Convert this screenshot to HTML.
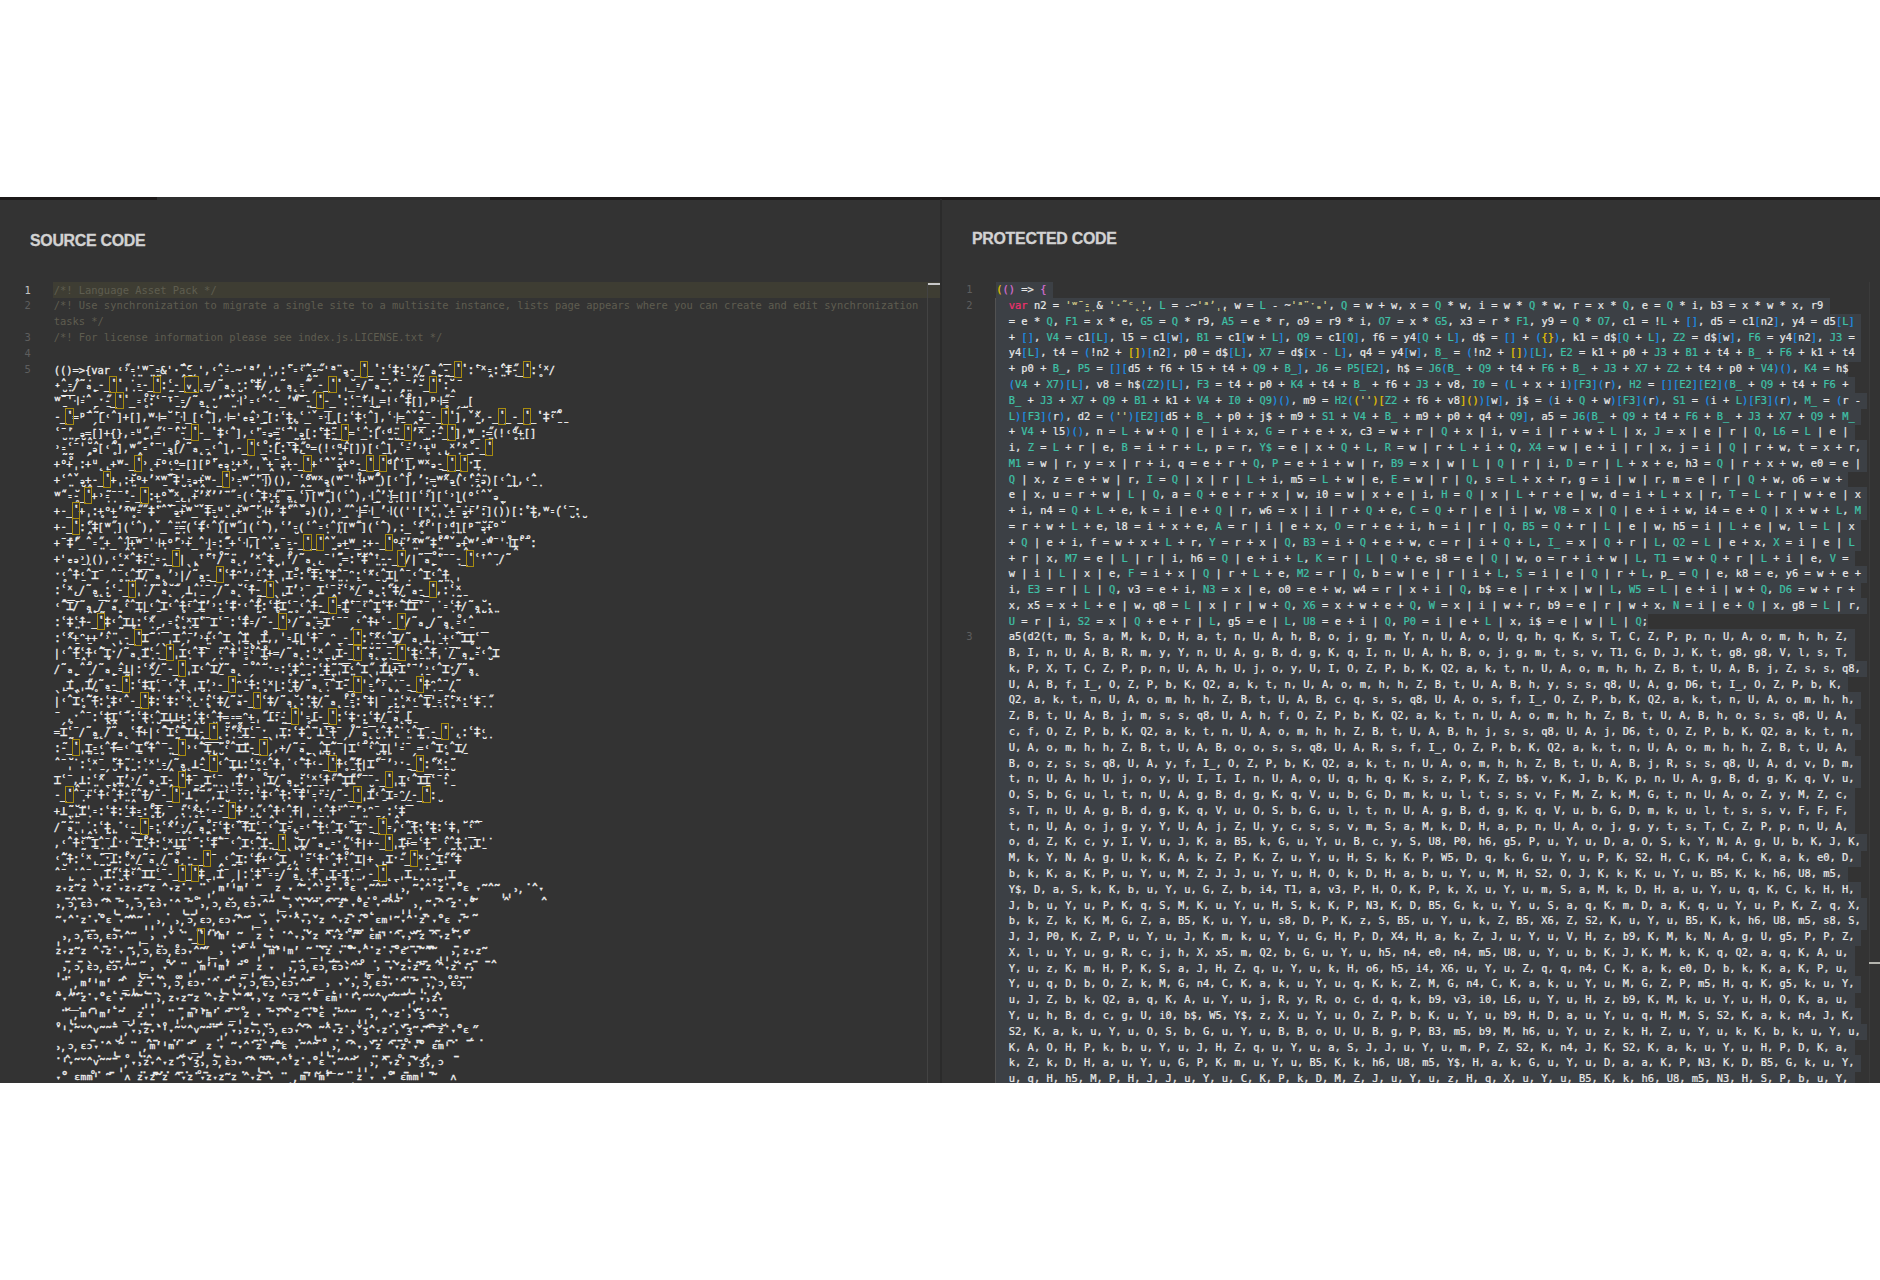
<!DOCTYPE html>
<html><head><meta charset="utf-8"><title>code</title>
<style>
html,body{margin:0;padding:0;background:#fff;}
#app{position:absolute;left:0;top:197.0px;width:1880px;height:885.5px;background:#333333;overflow:hidden;}
.t{position:absolute;font-family:"Liberation Sans",sans-serif;font-weight:bold;color:#d2d2d2;white-space:pre;-webkit-text-stroke:0.35px;}
.l{position:absolute;white-space:pre;font-family:"DejaVu Sans Mono","Liberation Mono",monospace;font-size:10.411px;line-height:15.774px;height:15.774px;color:#e8e8e8;-webkit-text-stroke:0.22px;}
.r{background:#3c4045;height:16.474px;}
.n{position:absolute;white-space:pre;font-family:"DejaVu Sans Mono","Liberation Mono",monospace;font-size:10.411px;line-height:15.774px;height:15.774px;color:#5e5e5e;text-align:right;width:20px;}
.c{color:#5f5d50;-webkit-text-stroke:0;}
.g{font-size:12.4px;letter-spacing:-1.1975px;outline:1px solid #a88c10;outline-offset:-0.5px;}
.w{color:#eeeeee;-webkit-text-stroke:0.33px;}
.m{font-size:12.4px;letter-spacing:-1.1975px;}
.m2{font-size:15.5px;letter-spacing:-3.0638px;vertical-align:-2.5px;}
.bar{position:absolute;}
</style></head><body>
<div id="app">
<div class="bar" style="left:0;top:0;width:1880px;height:2.5px;background:#1d1919"></div><div class="bar" style="left:157px;top:0;width:333px;height:2.5px;background:#2e2e2e"></div><div class="bar" style="left:940px;top:2px;width:1.6px;height:900px;background:#2b2b2b"></div><div class="bar" style="left:1869px;top:85.0px;width:1px;height:900px;background:#3b3b3b"></div><div class="bar" style="left:1869px;top:765.2px;width:11px;height:2px;background:#b4b4ae"></div><div class="t" id="t1" style="left:29.5px;top:33.400000000000006px;font-size:17.2px;line-height:20px;letter-spacing:-0.3px;transform-origin:0 0;transform:scaleX(0.925)">SOURCE CODE</div><div class="t" id="t2" style="left:971.5px;top:31.0px;font-size:17.2px;line-height:20px;letter-spacing:-0.3px;transform-origin:0 0;transform:scaleX(0.925)">PROTECTED CODE</div><div class="bar" style="left:995.0px;top:101.12400000000002px;width:1.3px;height:900px;background:#525252"></div><div class="n" style="left:952.4px;top:85.35px">1</div><div class="l r" style="left:996.3px;top:85.35px"><span style="color:#e8c400">(</span><span style="color:#d66fd2">(</span><span style="color:#d66fd2">)</span> =&gt; <span style="color:#d66fd2">{</span> </div>
<div class="n" style="left:952.4px;top:101.12px">2</div><div class="l r" style="left:996.3px;top:101.12px">  <span style="color:#f0306e">var</span> n2 = <span style="color:#d6cf8a">'ʷˉ̤꞊̣</span> &amp; <span style="color:#d6cf8a">'·˜ᶜ˛̣'</span>, <span style="color:#3fc1a8">L</span> = -~<span style="color:#d6cf8a">'ᵃʼˌ̣</span>, w = <span style="color:#3fc1a8">L</span> - ~<span style="color:#d6cf8a">'ᵃ¨ˑₔ'</span>, <span style="color:#3fc1a8">Q</span> = w + w, x = <span style="color:#3fc1a8">Q</span> * w, i = w * <span style="color:#3fc1a8">Q</span> * w, r = x * <span style="color:#3fc1a8">Q</span>, e = <span style="color:#3fc1a8">Q</span> * i, b3 = x * w * x, r9 </div>
<div class="l r" style="left:996.3px;top:116.90px">  = e * <span style="color:#3fc1a8">Q</span>, <span style="color:#3fc1a8">F1</span> = x * e, <span style="color:#3fc1a8">G5</span> = <span style="color:#3fc1a8">Q</span> * r9, <span style="color:#3fc1a8">A5</span> = e * r, o9 = r9 * i, <span style="color:#3fc1a8">O7</span> = x * <span style="color:#3fc1a8">G5</span>, x3 = r * <span style="color:#3fc1a8">F1</span>, y9 = <span style="color:#3fc1a8">Q</span> * <span style="color:#3fc1a8">O7</span>, c1 = !<span style="color:#3fc1a8">L</span> + <span style="color:#1a90ea">[</span><span style="color:#1a90ea">]</span>, d5 = c1<span style="color:#1a90ea">[</span>n2<span style="color:#1a90ea">]</span>, y4 = d5<span style="color:#1a90ea">[</span><span style="color:#3fc1a8">L</span><span style="color:#1a90ea">]</span> </div>
<div class="l r" style="left:996.3px;top:132.67px">  + <span style="color:#1a90ea">[</span><span style="color:#1a90ea">]</span>, <span style="color:#3fc1a8">V4</span> = c1<span style="color:#1a90ea">[</span><span style="color:#3fc1a8">L</span><span style="color:#1a90ea">]</span>, l5 = c1<span style="color:#1a90ea">[</span>w<span style="color:#1a90ea">]</span>, <span style="color:#3fc1a8">B1</span> = c1<span style="color:#1a90ea">[</span>w + <span style="color:#3fc1a8">L</span><span style="color:#1a90ea">]</span>, <span style="color:#3fc1a8">Q9</span> = c1<span style="color:#1a90ea">[</span><span style="color:#3fc1a8">Q</span><span style="color:#1a90ea">]</span>, f6 = y4<span style="color:#1a90ea">[</span><span style="color:#3fc1a8">Q</span> + <span style="color:#3fc1a8">L</span><span style="color:#1a90ea">]</span>, d$ = <span style="color:#1a90ea">[</span><span style="color:#1a90ea">]</span> + <span style="color:#1a90ea">(</span><span style="color:#e8c400">{</span><span style="color:#e8c400">}</span><span style="color:#1a90ea">)</span>, k1 = d$<span style="color:#1a90ea">[</span><span style="color:#3fc1a8">Q</span> + <span style="color:#3fc1a8">L</span><span style="color:#1a90ea">]</span>, <span style="color:#3fc1a8">Z2</span> = d$<span style="color:#1a90ea">[</span>w<span style="color:#1a90ea">]</span>, <span style="color:#3fc1a8">F6</span> = y4<span style="color:#1a90ea">[</span>n2<span style="color:#1a90ea">]</span>, <span style="color:#3fc1a8">J3</span> = </div>
<div class="l r" style="left:996.3px;top:148.45px">  y4<span style="color:#1a90ea">[</span><span style="color:#3fc1a8">L</span><span style="color:#1a90ea">]</span>, t4 = <span style="color:#1a90ea">(</span>!n2 + <span style="color:#e8c400">[</span><span style="color:#e8c400">]</span><span style="color:#1a90ea">)</span><span style="color:#1a90ea">[</span>n2<span style="color:#1a90ea">]</span>, p0 = d$<span style="color:#1a90ea">[</span><span style="color:#3fc1a8">L</span><span style="color:#1a90ea">]</span>, <span style="color:#3fc1a8">X7</span> = d$<span style="color:#1a90ea">[</span>x - <span style="color:#3fc1a8">L</span><span style="color:#1a90ea">]</span>, q4 = y4<span style="color:#1a90ea">[</span>w<span style="color:#1a90ea">]</span>, <span style="color:#3fc1a8">B_</span> = <span style="color:#1a90ea">(</span>!n2 + <span style="color:#e8c400">[</span><span style="color:#e8c400">]</span><span style="color:#1a90ea">)</span><span style="color:#1a90ea">[</span><span style="color:#3fc1a8">L</span><span style="color:#1a90ea">]</span>, <span style="color:#3fc1a8">E2</span> = k1 + p0 + <span style="color:#3fc1a8">J3</span> + <span style="color:#3fc1a8">B1</span> + t4 + <span style="color:#3fc1a8">B_</span> + <span style="color:#3fc1a8">F6</span> + k1 + t4 </div>
<div class="l r" style="left:996.3px;top:164.22px">  + p0 + <span style="color:#3fc1a8">B_</span>, <span style="color:#3fc1a8">P5</span> = <span style="color:#1a90ea">[</span><span style="color:#1a90ea">]</span><span style="color:#1a90ea">[</span>d5 + f6 + l5 + t4 + <span style="color:#3fc1a8">Q9</span> + <span style="color:#3fc1a8">B_</span><span style="color:#1a90ea">]</span>, <span style="color:#3fc1a8">J6</span> = <span style="color:#3fc1a8">P5</span><span style="color:#1a90ea">[</span><span style="color:#3fc1a8">E2</span><span style="color:#1a90ea">]</span>, h$ = <span style="color:#3fc1a8">J6</span><span style="color:#1a90ea">(</span><span style="color:#3fc1a8">B_</span> + <span style="color:#3fc1a8">Q9</span> + t4 + <span style="color:#3fc1a8">F6</span> + <span style="color:#3fc1a8">B_</span> + <span style="color:#3fc1a8">J3</span> + <span style="color:#3fc1a8">X7</span> + <span style="color:#3fc1a8">Z2</span> + t4 + p0 + <span style="color:#3fc1a8">V4</span><span style="color:#1a90ea">)</span><span style="color:#1a90ea">(</span><span style="color:#1a90ea">)</span>, <span style="color:#3fc1a8">K4</span> = h$</div>
<div class="l r" style="left:996.3px;top:179.99px">  <span style="color:#1a90ea">(</span><span style="color:#3fc1a8">V4</span> + <span style="color:#3fc1a8">X7</span><span style="color:#1a90ea">)</span><span style="color:#1a90ea">[</span><span style="color:#3fc1a8">L</span><span style="color:#1a90ea">]</span>, v8 = h$<span style="color:#1a90ea">(</span><span style="color:#3fc1a8">Z2</span><span style="color:#1a90ea">)</span><span style="color:#1a90ea">[</span><span style="color:#3fc1a8">L</span><span style="color:#1a90ea">]</span>, <span style="color:#3fc1a8">F3</span> = t4 + p0 + <span style="color:#3fc1a8">K4</span> + t4 + <span style="color:#3fc1a8">B_</span> + f6 + <span style="color:#3fc1a8">J3</span> + v8, <span style="color:#3fc1a8">I0</span> = <span style="color:#1a90ea">(</span><span style="color:#3fc1a8">L</span> + x + i<span style="color:#1a90ea">)</span><span style="color:#1a90ea">[</span><span style="color:#3fc1a8">F3</span><span style="color:#1a90ea">]</span><span style="color:#1a90ea">(</span>r<span style="color:#1a90ea">)</span>, <span style="color:#3fc1a8">H2</span> = <span style="color:#1a90ea">[</span><span style="color:#1a90ea">]</span><span style="color:#1a90ea">[</span><span style="color:#3fc1a8">E2</span><span style="color:#1a90ea">]</span><span style="color:#1a90ea">[</span><span style="color:#3fc1a8">E2</span><span style="color:#1a90ea">]</span><span style="color:#1a90ea">(</span><span style="color:#3fc1a8">B_</span> + <span style="color:#3fc1a8">Q9</span> + t4 + <span style="color:#3fc1a8">F6</span> + </div>
<div class="l r" style="left:996.3px;top:195.77px">  <span style="color:#3fc1a8">B_</span> + <span style="color:#3fc1a8">J3</span> + <span style="color:#3fc1a8">X7</span> + <span style="color:#3fc1a8">Q9</span> + <span style="color:#3fc1a8">B1</span> + k1 + <span style="color:#3fc1a8">V4</span> + <span style="color:#3fc1a8">I0</span> + <span style="color:#3fc1a8">Q9</span><span style="color:#1a90ea">)</span><span style="color:#1a90ea">(</span><span style="color:#1a90ea">)</span>, m9 = <span style="color:#3fc1a8">H2</span><span style="color:#1a90ea">(</span><span style="color:#e8c400">(</span><span style="color:#d6cf8a">''</span><span style="color:#e8c400">)</span><span style="color:#e8c400">[</span><span style="color:#3fc1a8">Z2</span> + f6 + v8<span style="color:#e8c400">]</span><span style="color:#e8c400">(</span><span style="color:#e8c400">)</span><span style="color:#1a90ea">)</span><span style="color:#1a90ea">[</span>w<span style="color:#1a90ea">]</span>, j$ = <span style="color:#1a90ea">(</span>i + <span style="color:#3fc1a8">Q</span> + w<span style="color:#1a90ea">)</span><span style="color:#1a90ea">[</span><span style="color:#3fc1a8">F3</span><span style="color:#1a90ea">]</span><span style="color:#1a90ea">(</span>r<span style="color:#1a90ea">)</span>, <span style="color:#3fc1a8">S1</span> = <span style="color:#1a90ea">(</span>i + <span style="color:#3fc1a8">L</span><span style="color:#1a90ea">)</span><span style="color:#1a90ea">[</span><span style="color:#3fc1a8">F3</span><span style="color:#1a90ea">]</span><span style="color:#1a90ea">(</span>r<span style="color:#1a90ea">)</span>, <span style="color:#3fc1a8">M_</span> = <span style="color:#1a90ea">(</span>r - </div>
<div class="l r" style="left:996.3px;top:211.54px">  <span style="color:#3fc1a8">L</span><span style="color:#1a90ea">)</span><span style="color:#1a90ea">[</span><span style="color:#3fc1a8">F3</span><span style="color:#1a90ea">]</span><span style="color:#1a90ea">(</span>r<span style="color:#1a90ea">)</span>, d2 = <span style="color:#1a90ea">(</span><span style="color:#d6cf8a">''</span><span style="color:#1a90ea">)</span><span style="color:#1a90ea">[</span><span style="color:#3fc1a8">E2</span><span style="color:#1a90ea">]</span><span style="color:#1a90ea">[</span>d5 + <span style="color:#3fc1a8">B_</span> + p0 + j$ + m9 + <span style="color:#3fc1a8">S1</span> + <span style="color:#3fc1a8">V4</span> + <span style="color:#3fc1a8">B_</span> + m9 + p0 + q4 + <span style="color:#3fc1a8">Q9</span><span style="color:#1a90ea">]</span>, a5 = <span style="color:#3fc1a8">J6</span><span style="color:#1a90ea">(</span><span style="color:#3fc1a8">B_</span> + <span style="color:#3fc1a8">Q9</span> + t4 + <span style="color:#3fc1a8">F6</span> + <span style="color:#3fc1a8">B_</span> + <span style="color:#3fc1a8">J3</span> + <span style="color:#3fc1a8">X7</span> + <span style="color:#3fc1a8">Q9</span> + <span style="color:#3fc1a8">M_</span> </div>
<div class="l r" style="left:996.3px;top:227.32px">  + <span style="color:#3fc1a8">V4</span> + l5<span style="color:#1a90ea">)</span><span style="color:#1a90ea">(</span><span style="color:#1a90ea">)</span>, n = <span style="color:#3fc1a8">L</span> + w + <span style="color:#3fc1a8">Q</span> | e | i + x, <span style="color:#3fc1a8">G</span> = r + e + x, c3 = w + r | <span style="color:#3fc1a8">Q</span> + x | i, v = i | r + w + <span style="color:#3fc1a8">L</span> | x, <span style="color:#3fc1a8">J</span> = x | e | r | <span style="color:#3fc1a8">Q</span>, <span style="color:#3fc1a8">L6</span> = <span style="color:#3fc1a8">L</span> | e | </div>
<div class="l r" style="left:996.3px;top:243.09px">  i, <span style="color:#3fc1a8">Z</span> = <span style="color:#3fc1a8">L</span> + r | e, <span style="color:#3fc1a8">B</span> = i + r + <span style="color:#3fc1a8">L</span>, p = r, <span style="color:#3fc1a8">Y$</span> = e | x + <span style="color:#3fc1a8">Q</span> + <span style="color:#3fc1a8">L</span>, <span style="color:#3fc1a8">R</span> = w | r + <span style="color:#3fc1a8">L</span> + i + <span style="color:#3fc1a8">Q</span>, <span style="color:#3fc1a8">X4</span> = w | e + i | r | x, j = i | <span style="color:#3fc1a8">Q</span> | r + w, t = x + r, </div>
<div class="l r" style="left:996.3px;top:258.86px">  <span style="color:#3fc1a8">M1</span> = w | r, y = x | r + i, q = e + r + <span style="color:#3fc1a8">Q</span>, <span style="color:#3fc1a8">P</span> = e + i + w | r, <span style="color:#3fc1a8">B9</span> = x | w | <span style="color:#3fc1a8">L</span> | <span style="color:#3fc1a8">Q</span> | r | i, <span style="color:#3fc1a8">D</span> = r | <span style="color:#3fc1a8">L</span> + x + e, h3 = <span style="color:#3fc1a8">Q</span> | r + x + w, e0 = e | </div>
<div class="l r" style="left:996.3px;top:274.64px">  <span style="color:#3fc1a8">Q</span> | x, z = e + w | r, <span style="color:#3fc1a8">I</span> = <span style="color:#3fc1a8">Q</span> | x | r | <span style="color:#3fc1a8">L</span> + i, m5 = <span style="color:#3fc1a8">L</span> + w | e, <span style="color:#3fc1a8">E</span> = w | r | <span style="color:#3fc1a8">Q</span>, s = <span style="color:#3fc1a8">L</span> + x + r, g = i | w | r, m = e | r | <span style="color:#3fc1a8">Q</span> + w, o6 = w + </div>
<div class="l r" style="left:996.3px;top:290.41px">  e | x, u = r + w | <span style="color:#3fc1a8">L</span> | <span style="color:#3fc1a8">Q</span>, a = <span style="color:#3fc1a8">Q</span> + e + r + x | w, i0 = w | x + e | i, <span style="color:#3fc1a8">H</span> = <span style="color:#3fc1a8">Q</span> | x | <span style="color:#3fc1a8">L</span> + r + e | w, d = i + <span style="color:#3fc1a8">L</span> + x | r, <span style="color:#3fc1a8">T</span> = <span style="color:#3fc1a8">L</span> + r | w + e | x </div>
<div class="l r" style="left:996.3px;top:306.19px">  + i, n4 = <span style="color:#3fc1a8">Q</span> + <span style="color:#3fc1a8">L</span> + e, k = i | e + <span style="color:#3fc1a8">Q</span> | r, w6 = x | i | r + <span style="color:#3fc1a8">Q</span> + e, <span style="color:#3fc1a8">C</span> = <span style="color:#3fc1a8">Q</span> + r | e | i | w, <span style="color:#3fc1a8">V8</span> = x | <span style="color:#3fc1a8">Q</span> | e + i + w, i4 = e + <span style="color:#3fc1a8">Q</span> | x + w + <span style="color:#3fc1a8">L</span>, <span style="color:#3fc1a8">M</span> </div>
<div class="l r" style="left:996.3px;top:321.96px">  = r + w + <span style="color:#3fc1a8">L</span> + e, l8 = i + x + e, <span style="color:#3fc1a8">A</span> = r | i | e + x, <span style="color:#3fc1a8">O</span> = r + e + i, h = i | r | <span style="color:#3fc1a8">Q</span>, <span style="color:#3fc1a8">B5</span> = <span style="color:#3fc1a8">Q</span> + r | <span style="color:#3fc1a8">L</span> | e | w, h5 = i | <span style="color:#3fc1a8">L</span> + e | w, l = <span style="color:#3fc1a8">L</span> | x </div>
<div class="l r" style="left:996.3px;top:337.73px">  + <span style="color:#3fc1a8">Q</span> | e + i, f = w + x + <span style="color:#3fc1a8">L</span> + r, <span style="color:#3fc1a8">Y</span> = r + x | <span style="color:#3fc1a8">Q</span>, <span style="color:#3fc1a8">B3</span> = i + <span style="color:#3fc1a8">Q</span> + e + w, c = r | i + <span style="color:#3fc1a8">Q</span> + <span style="color:#3fc1a8">L</span>, <span style="color:#3fc1a8">I_</span> = x | <span style="color:#3fc1a8">Q</span> + r | <span style="color:#3fc1a8">L</span>, <span style="color:#3fc1a8">Q2</span> = <span style="color:#3fc1a8">L</span> | e + x, <span style="color:#3fc1a8">X</span> = i | e | <span style="color:#3fc1a8">L</span> </div>
<div class="l r" style="left:996.3px;top:353.51px">  + r | x, <span style="color:#3fc1a8">M7</span> = e | <span style="color:#3fc1a8">L</span> | r | i, h6 = <span style="color:#3fc1a8">Q</span> | e + i + <span style="color:#3fc1a8">L</span>, <span style="color:#3fc1a8">K</span> = r | <span style="color:#3fc1a8">L</span> | <span style="color:#3fc1a8">Q</span> + e, s8 = e | <span style="color:#3fc1a8">Q</span> | w, o = r + i + w | <span style="color:#3fc1a8">L</span>, <span style="color:#3fc1a8">T1</span> = w + <span style="color:#3fc1a8">Q</span> + r | <span style="color:#3fc1a8">L</span> + i | e, <span style="color:#3fc1a8">V</span> = </div>
<div class="l r" style="left:996.3px;top:369.28px">  w | i | <span style="color:#3fc1a8">L</span> | x | e, <span style="color:#3fc1a8">F</span> = i + x | <span style="color:#3fc1a8">Q</span> | r + <span style="color:#3fc1a8">L</span> + e, <span style="color:#3fc1a8">M2</span> = r | <span style="color:#3fc1a8">Q</span>, b = w | e | r | i + <span style="color:#3fc1a8">L</span>, <span style="color:#3fc1a8">S</span> = i | e | <span style="color:#3fc1a8">Q</span> | r + <span style="color:#3fc1a8">L</span>, p_ = <span style="color:#3fc1a8">Q</span> | e, k8 = e, y6 = w + e + </div>
<div class="l r" style="left:996.3px;top:385.06px">  i, <span style="color:#3fc1a8">E3</span> = r | <span style="color:#3fc1a8">L</span> | <span style="color:#3fc1a8">Q</span>, v3 = e + i, <span style="color:#3fc1a8">N3</span> = x | e, o0 = e + w, w4 = r | x + i | <span style="color:#3fc1a8">Q</span>, b$ = e | r + x | w | <span style="color:#3fc1a8">L</span>, <span style="color:#3fc1a8">W5</span> = <span style="color:#3fc1a8">L</span> | e + i | w + <span style="color:#3fc1a8">Q</span>, <span style="color:#3fc1a8">D6</span> = w + r + </div>
<div class="l r" style="left:996.3px;top:400.83px">  x, x5 = x + <span style="color:#3fc1a8">L</span> + e | w, q8 = <span style="color:#3fc1a8">L</span> | x | r | w + <span style="color:#3fc1a8">Q</span>, <span style="color:#3fc1a8">X6</span> = x + w + e + <span style="color:#3fc1a8">Q</span>, <span style="color:#3fc1a8">W</span> = x | i | w + r, b9 = e | r | w + x, <span style="color:#3fc1a8">N</span> = i | e + <span style="color:#3fc1a8">Q</span> | x, g8 = <span style="color:#3fc1a8">L</span> | r, </div>
<div class="l r" style="left:996.3px;top:416.60px">  <span style="color:#3fc1a8">U</span> = r | i, <span style="color:#3fc1a8">S2</span> = x | <span style="color:#3fc1a8">Q</span> + e + r | <span style="color:#3fc1a8">L</span>, g5 = e | <span style="color:#3fc1a8">L</span>, <span style="color:#3fc1a8">U8</span> = e + i | <span style="color:#3fc1a8">Q</span>, <span style="color:#3fc1a8">P0</span> = i | e + <span style="color:#3fc1a8">L</span> | x, i$ = e | w | <span style="color:#3fc1a8">L</span> | <span style="color:#3fc1a8">Q</span>;</div>
<div class="n" style="left:952.4px;top:432.38px">3</div><div class="l r" style="left:996.3px;top:432.38px">  a5(d2(t, m, S, a, M, k, D, H, a, t, n, U, A, h, B, o, j, g, m, Y, n, U, A, o, U, q, h, q, K, s, T, C, Z, P, p, n, U, A, o, m, h, h, Z, </div>
<div class="l r" style="left:996.3px;top:448.15px">  B, I, n, U, A, B, R, m, y, Y, n, U, A, g, B, d, g, K, q, I, n, U, A, h, B, o, j, g, m, t, s, v, T1, G, D, J, K, t, g8, g8, V, l, s, T, </div>
<div class="l r" style="left:996.3px;top:463.93px">  k, P, X, T, C, Z, P, p, n, U, A, h, U, j, o, y, U, I, O, Z, P, b, K, Q2, a, k, t, n, U, A, o, m, h, h, Z, B, t, U, A, B, j, Z, s, s, q8, </div>
<div class="l r" style="left:996.3px;top:479.70px">  U, A, B, f, I_, O, Z, P, b, K, Q2, a, k, t, n, U, A, o, m, h, h, Z, B, t, U, A, B, h, y, s, s, q8, U, A, g, D6, t, I_, O, Z, P, b, K, </div>
<div class="l r" style="left:996.3px;top:495.47px">  Q2, a, k, t, n, U, A, o, m, h, h, Z, B, t, U, A, B, c, q, s, s, q8, U, A, o, s, f, I_, O, Z, P, b, K, Q2, a, k, t, n, U, A, o, m, h, h, </div>
<div class="l r" style="left:996.3px;top:511.25px">  Z, B, t, U, A, B, j, m, s, s, q8, U, A, h, f, O, Z, P, b, K, Q2, a, k, t, n, U, A, o, m, h, h, Z, B, t, U, A, B, h, o, s, s, q8, U, A, </div>
<div class="l r" style="left:996.3px;top:527.02px">  c, f, O, Z, P, b, K, Q2, a, k, t, n, U, A, o, m, h, h, Z, B, t, U, A, B, h, j, s, s, q8, U, A, j, D6, t, O, Z, P, b, K, Q2, a, k, t, n, </div>
<div class="l r" style="left:996.3px;top:542.80px">  U, A, o, m, h, h, Z, B, t, U, A, B, o, o, s, s, q8, U, A, R, s, f, I_, O, Z, P, b, K, Q2, a, k, t, n, U, A, o, m, h, h, Z, B, t, U, A, </div>
<div class="l r" style="left:996.3px;top:558.57px">  B, o, z, s, s, q8, U, A, y, f, I_, O, Z, P, b, K, Q2, a, k, t, n, U, A, o, m, h, h, Z, B, t, U, A, B, j, R, s, s, q8, U, A, d, v, D, m, </div>
<div class="l r" style="left:996.3px;top:574.34px">  t, n, U, A, h, U, j, o, y, U, I, I, I, n, U, A, o, U, q, h, q, K, s, z, P, K, Z, b$, v, K, J, b, K, p, n, U, A, g, B, d, g, K, q, V, u, </div>
<div class="l r" style="left:996.3px;top:590.12px">  O, S, b, G, u, l, t, n, U, A, g, B, d, g, K, q, V, u, b, G, D, m, k, u, l, t, s, s, v, F, M, Z, k, M, G, t, n, U, A, o, Z, y, M, Z, c, </div>
<div class="l r" style="left:996.3px;top:605.89px">  s, T, n, U, A, g, B, d, g, K, q, V, u, O, S, b, G, u, l, t, n, U, A, g, B, d, g, K, q, V, u, b, G, D, m, k, u, l, t, s, s, v, F, F, F, </div>
<div class="l r" style="left:996.3px;top:621.67px">  t, n, U, A, o, j, g, y, Y, U, A, j, Z, U, y, c, s, s, v, m, S, a, M, k, D, H, a, p, n, U, A, o, j, g, y, t, s, T, C, Z, P, p, n, U, A, </div>
<div class="l r" style="left:996.3px;top:637.44px">  o, d, Z, K, c, y, I, V, u, J, K, a, B5, k, G, u, Y, u, B, c, y, S, U8, P0, h6, g5, P, u, Y, u, D, a, O, S, k, Y, N, A, g, U, b, K, J, K, </div>
<div class="l r" style="left:996.3px;top:653.21px">  M, k, Y, N, A, g, U, k, K, A, k, Z, P, K, Z, u, Y, u, H, S, k, K, P, W5, D, q, k, G, u, Y, u, P, K, S2, H, C, K, n4, C, K, a, k, e0, D, </div>
<div class="l r" style="left:996.3px;top:668.99px">  b, k, K, a, K, P, u, Y, u, M, Z, J, J, u, Y, u, H, O, k, D, H, a, b, u, Y, u, M, H, S2, O, J, K, k, K, u, Y, u, B5, K, k, h6, U8, m5, </div>
<div class="l r" style="left:996.3px;top:684.76px">  Y$, D, a, S, k, K, b, u, Y, u, G, Z, b, i4, T1, a, v3, P, H, O, K, P, k, X, u, Y, u, m, S, a, M, k, D, H, a, u, Y, u, q, K, C, k, H, H, </div>
<div class="l r" style="left:996.3px;top:700.54px">  J, b, u, Y, u, P, K, q, S, M, K, u, Y, u, H, S, k, K, P, N3, K, D, B5, G, k, u, Y, u, S, a, q, K, m, D, a, K, q, u, Y, u, P, K, Z, q, X, </div>
<div class="l r" style="left:996.3px;top:716.31px">  b, k, Z, k, K, M, G, Z, a, B5, K, u, Y, u, s8, D, P, K, z, S, B5, u, Y, u, k, Z, B5, X6, Z, S2, K, u, Y, u, B5, K, k, h6, U8, m5, s8, S, </div>
<div class="l r" style="left:996.3px;top:732.08px">  J, J, P0, K, Z, P, u, Y, u, J, K, m, k, u, Y, u, G, H, P, D, X4, H, a, k, Z, J, u, Y, u, V, H, z, b9, K, M, k, N, A, g, U, g5, P, P, Z, </div>
<div class="l r" style="left:996.3px;top:747.86px">  X, l, u, Y, u, g, R, c, j, h, X, x5, m, Q2, b, G, u, Y, u, h5, n4, e0, n4, m5, U8, u, Y, u, b, K, J, K, M, k, K, q, Q2, a, q, K, A, u, </div>
<div class="l r" style="left:996.3px;top:763.63px">  Y, u, z, K, m, H, P, K, S, a, J, H, Z, q, u, Y, u, k, H, o6, h5, i4, X6, u, Y, u, Z, q, q, n4, C, K, a, k, e0, D, b, k, K, a, K, P, u, </div>
<div class="l r" style="left:996.3px;top:779.41px">  Y, u, q, D, b, O, Z, k, M, G, n4, C, K, a, k, u, Y, u, q, K, k, Z, M, G, n4, C, K, a, k, u, Y, u, M, G, Z, P, m5, H, q, K, g5, k, u, Y, </div>
<div class="l r" style="left:996.3px;top:795.18px">  u, J, Z, b, k, Q2, a, q, K, A, u, Y, u, j, R, y, R, o, c, d, q, k, b9, v3, i0, L6, u, Y, u, H, z, b9, K, M, k, u, Y, u, H, O, K, a, u, </div>
<div class="l r" style="left:996.3px;top:810.95px">  Y, u, h, B, d, c, g, U, i0, b$, W5, Y$, z, X, u, Y, u, O, Z, P, b, K, u, Y, u, b9, H, D, a, u, Y, u, q, H, M, S, S2, K, a, k, n4, J, K, </div>
<div class="l r" style="left:996.3px;top:826.73px">  S2, K, a, k, u, Y, u, O, S, b, G, u, Y, u, B, B, o, U, U, B, g, P, B3, m5, b9, M, h6, u, Y, u, z, k, H, Z, u, Y, u, k, K, b, k, u, Y, u, </div>
<div class="l r" style="left:996.3px;top:842.50px">  K, A, O, H, P, k, b, u, Y, u, J, H, Z, q, u, Y, u, a, S, J, J, u, Y, u, m, P, Z, S2, K, n4, J, K, S2, K, a, k, u, Y, u, H, P, D, K, a, </div>
<div class="l r" style="left:996.3px;top:858.28px">  k, Z, k, D, H, a, u, Y, u, G, P, K, m, u, Y, u, B5, K, k, h6, U8, m5, Y$, H, a, k, G, u, Y, u, D, a, a, K, P, N3, K, D, B5, G, k, u, Y, </div>
<div class="l r" style="left:996.3px;top:874.05px">  u, q, H, h5, M, P, H, J, J, u, Y, u, C, K, P, k, D, M, Z, J, u, Y, u, z, H, q, X, u, Y, u, B5, K, k, h6, U8, m5, N3, H, S, P, b, u, Y, </div>
<div class="bar" style="left:53.25px;top:85.0px;width:886.75px;height:16px;background:#3e3d33"></div><div class="n" style="left:10.8px;top:85.65px;color:#c4c4c4">1</div><div class="n" style="left:10.8px;top:101.42px;color:#5e5e5e">2</div><div class="n" style="left:10.8px;top:132.97px;color:#5e5e5e">3</div><div class="n" style="left:10.8px;top:148.75px;color:#5e5e5e">4</div><div class="n" style="left:10.8px;top:164.52px;color:#5e5e5e">5</div><div class="l c" style="left:53.75px;top:85.65px">/*! Language Asset Pack */</div>
<div class="l c" style="left:53.75px;top:101.42px">/*! Use synchronization to migrate a single site to a multisite instance, lists page appears where you can create and edit synchronization</div>
<div class="l c" style="left:53.75px;top:117.20px">tasks */</div>
<div class="l c" style="left:53.75px;top:132.97px">/*! For license information please see index.js.LICENSE.txt */</div>
<div class="l w" style="left:53.75px;top:164.52px">(()=&gt;{var <span class="m">˓̋˒̣꞊̤</span>'<span class="m">ʷ̤ˉ̤꞊</span>&amp;'<span class="m">·̭̂˜̱̄ᶜ˛</span>',<span class="m">˓̣ˆ̇꞊</span>-~'<span class="m">ᵃʼˌ̣</span>',<span class="m">꞉̃ʿ꞊̈˓̭̆ˆ̰꞊̋</span>~'<span class="m">ᵃ¨̥ₔ˗</span>_<span class="g">ʽ</span>_<span class="m">ʽ꞉ʿ‡̱꞉ʿ̭ˣ̰</span>/<span class="m">˜ₐ̱̂˛̰̅˗</span>_<span class="g">ʽ</span><span class="m">ʽ꞉̄ʿˣ̭꞊꞉̤̂ʿ̄‡̣̋˗</span>_<span class="g">ʽ</span><span class="m">꞉̥ʿˣ</span>/</div>
<div class="l w" style="left:53.75px;top:180.29px"><span class="m">˖̮ˆ̤꞊̂</span>/<span class="m">˜̇ₐ̱˛˗</span>_<span class="g">ʽ</span><span class="m">ʽˌ̣˙̱꞊˗</span>_<span class="g">ʽ</span><span class="m">꞉̰ʿ˗</span>_<span class="g">ᵥ˛</span><span class="m">˛̤</span>=/<span class="m">˜ₐ˛̮ˑ꞉̈ʿ̆‡</span>/<span class="m">ˏ̮</span>,<span class="m">˜̣ₐ˛̣꞊̋ˆˏ˗</span>_<span class="g">ʽ</span><span class="m">ʽˌ̆</span>_<span class="m">꞊</span>/<span class="m">˜ₐ̣̅˛̣ˑˆ̥ˏ̤ˉʼ̆˗</span>_<span class="g">ʽ</span><span class="m">ʽ꞉̭˘̄</span></div>
<div class="l w" style="left:53.75px;top:196.07px"><span class="m">ʷ̱̅ˉ̅ˈ꜊̇꞊ˆ̱ˏˑ̱̋˗</span>_<span class="g">ʽ</span><span class="m">ʽ</span>_<span class="m">꞊̥̊˓̆꞉ʿˉᵎ̱ˉ̰꞊</span>/<span class="m">˜̱ₐ˛̮ˑʼ̂˜̤ˇ꜊ʾ꞊˓ˆˑ˗</span>_<span class="m">ʼ̋ʷ̅ˉ̤˗</span>_<span class="g">ʽ</span><span class="m">˗</span>_<span class="m">ʽ꞉̣ʿ̱ˉ̆ᵎ̱꜊̤</span>_=!<span class="m">˓ˆ̊‡</span>[],<span class="m">ᵖ꜊̥̋</span>=<span class="m">ˉˏ̮</span>_[</div>
<div class="l w" style="left:53.75px;top:211.84px"><span class="m">˗</span>_<span class="g">ʽ</span>=<span class="m">ᵖ̂ˉ̃ˏ̱̄</span>[<span class="m">˓ˆ</span>]+[],<span class="m">ʷ꜊</span>=<span class="m">˘̱̄ˈ̇꜊</span>_[<span class="m">˓̣̈ˆ</span>],<span class="m">꜊</span>='<span class="m">ₑ̱̂ₔ˒̱̃</span>_[<span class="m">꞉ʿ̰‡̥</span>,<span class="m">ʿ̇</span>_<span class="m">ˇ꞊̰̅꜊̭</span>_[<span class="m">꞉ʿ‡̣˓ˆ</span>],<span class="m">ʿ̣꜊̱</span>=<span class="m">ˆ̭ˇ̂ₔ̄</span>_<span class="m">˗</span>_<span class="g">ʽ</span><span class="m">ʽ</span>],<span class="m">ˇ̰̆ˣ</span>,<span class="m">˗</span>_<span class="g">ʽ</span>_<span class="m">˗</span>_<span class="g">ʽ</span>_<span class="m">ʽ‡̃˓̱̊ˆ̱</span></div>
<div class="l w" style="left:53.75px;top:227.62px"><span class="m">ʿ̮ˉ̤̇ˈ̱ˏ̮ₔ̭</span>=[]+{},<span class="m">꞊ᵘ̱̋˛ˌ̋</span>=<span class="m">ʿˉ̂ˈ̣̆˗</span>_<span class="g">ʽ</span><span class="m">˗</span>_<span class="m">ʽ‡˓̇ˆ</span>],<span class="m">˓̈ˈ꞊ₔ̰̈</span>=<span class="m">ʿ̂ˉ̰ˈ̰ₔ̣</span>[<span class="m">꞉̄ʿ̱‡̰̃˗</span>_<span class="g">ʽ</span>=<span class="m">ʿ̂</span>_<span class="m">꞉̋</span>[<span class="m">˓̰ᵈ̮̈˗</span>_<span class="g">ʽ</span><span class="m">ʼ̅ˣ̮</span>_<span class="m">꞉̂˗</span>_<span class="g">ʽ</span>],<span class="m">ʷ</span>_<span class="m">꞉̤̋</span>=(!<span class="m">˓̥̋ᵅ̤</span>+[]</div>
<div class="l w" style="left:53.75px;top:243.39px"><span class="m">˒̰꞊̰ʿˉˈ̥̆ˏ̂ₔ</span>[<span class="m">˓̥̊ˆ</span>],<span class="m">ʷ̭˝꞊̇ʿ̄ˉ̱ˈ̥ₔ̊</span>[/<span class="m">˜ₐ˛̭</span>-<span class="m">˓ˆ̣</span>],<span class="m">˗</span>_<span class="g">ʽ</span><span class="m">ʿ̊</span>_<span class="m">꞉̱̃</span>[<span class="m">꞉̅ʿ‡̱̋</span>,<span class="m">ᵒ</span>=(!<span class="m">˓̥ᵅ̂</span>+[])[<span class="m">˓̱ˆ̣</span>],<span class="m">ʿ̇꞊ʼ˒̥</span>+<span class="m">ᵘ˛̮ˌˣ̣ʼˣ̣̊</span>_<span class="m">˗</span>_<span class="g">ʽ</span></div>
<div class="l w" style="left:53.75px;top:259.16px">+<span class="m">ᵒ̊</span>+<span class="m">ˌ꞉</span>+<span class="m">ᵘ˛̱ˌ</span>+<span class="m">ʷ˗</span>_<span class="g">ʽ</span><span class="m">˒˛̄</span>+<span class="m">ᵒ̣˓̱ᵒ</span>=[][<span class="m">ᵖ̃ˈₑ̣ₔ̮˒</span>+<span class="m">ˣ</span>,<span class="m">ˌ̂ˇ̭</span>+<span class="m">ˉ̣̊ₔ̣</span>+<span class="m">˗</span>_<span class="g">ʽ</span>+<span class="m">ʿ̇ˆˇ̭̃ₔ</span>+<span class="m">ᵒ̣˗</span>_<span class="g">ʽ</span>_<span class="g">ʽ</span><span class="m">ᵈ̂</span>[<span class="m">ʿ̱̅</span>],<span class="m">ʷˣₔ̱˗</span>_<span class="g">ʽ</span>_<span class="g">ʽ</span><span class="m">ˑ̣⌶̣</span></div>
<div class="l w" style="left:53.75px;top:274.94px">+<span class="m">ʿ̤ˆˇ̮ₔ̭</span>+<span class="m">˗</span>_<span class="g">ʽ</span>+<span class="m">ˌ꞉̤̆</span>+<span class="m">ᵒ</span>+<span class="m">ʼˣ̱ʷ̅˝‡̮ˈ̥꞊ₔ̭̇</span>+<span class="m">ʷ˗</span>_<span class="g">ʽ</span><span class="m">˒̣꞊ʷ̣̆ˉ̈ˈ̣̅꜊</span>)(),<span class="m">ˉ̭ʿ̰̃ᵒʷˣ̥ₔ</span>(<span class="m">ʷ̱̈ˉˈ̊꜊</span>+<span class="m">ʷ̤̊˝</span>)[<span class="m">˓ˆ̊</span>],<span class="m">ʼ꞉̮</span>=<span class="m">ʷ̃ˣ̱ₔ̂</span>(<span class="m">˓̣̂ˈ̭̂꞊̈ₔ</span>)[<span class="m">˓̰ˆ̰</span>],<span class="m">˓̱̇ˆ̣</span></div>
<div class="l w" style="left:53.75px;top:290.71px"><span class="m">ʷ̇˝꞊̥̆˗</span>_<span class="g">ʽ</span>+<span class="m">˒̣̃꞊̣ˉˉ̱̇ʿ˗</span>_<span class="g">ʽ</span><span class="m">꞉̤</span>+<span class="m">ᵒ̋ˇ̱ˣ̱</span>,<span class="m">ˌ̆</span>+<span class="m">ʼ̆ˣʼʼ̈ˉ˝꞊</span>(<span class="m">˓̣̄ˆ‡̥˒̥̋</span>+<span class="m">˜̤̅ₐ˛ʿ̅</span>)[<span class="m">ʷ̭̄˝</span>](<span class="m">ʿˆ</span>),<span class="m">꜊̰̂</span>_<span class="m">ʼ̮̆꜊̣</span>=[][<span class="m">ʿ̋˒</span>][<span class="m">ʿ˒̰</span>](<span class="m">ᵒʿˆˇₔ̰ˎ</span></div>
<div class="l w" style="left:53.75px;top:306.49px">+<span class="m">˗</span>_<span class="g">ʽ</span>+<span class="m">ˌ꞉̥</span>+<span class="m">ᵒ̰</span>+<span class="m">ʼ̄ˣ̥ʷ̋꞊˝‡̈ʿˆ̅ˇ̱ₔ̆</span>+<span class="m">ʷ̆</span>_<span class="m">ˇ̅‡̮꞊ᵘ̆˛̱ˌ̆</span>+<span class="m">ʷ̃ˉ̮̆ˈ꜊</span>+<span class="m">˝‡̋ʿˆ̆ˇₔ</span>)(),<span class="m">˒̣̋</span>_<span class="m">ˆ̥꜊̃</span>=<span class="m">꜊</span>_<span class="m">ʼ꜊̣</span>((''[<span class="m">ˣ̣̆</span>,<span class="m">ˌ̮ˇ̱</span>+<span class="m">ˉ̰̇ₔ̄</span>+<span class="m">ʼ̄꞉</span>]())[<span class="m">꞉̇ʿ̮‡</span>,<span class="m">ʷ꞊̇</span>(<span class="m">ʿ̮̄ˉ̣꞉̮</span></div>
<div class="l w" style="left:53.75px;top:322.26px">+<span class="m">˗</span>_<span class="g">ʽ</span><span class="m">꞉̭̋ʿ‡</span>[<span class="m">ʷ̣˝</span>](<span class="m">ʿˆ</span>),<span class="m">ˇ</span>_<span class="m">ˆ̰̈꞊̣̃</span>=(<span class="m">ʿ̋‡˓ˆ̣̋</span>)[<span class="m">ʷ̱˝</span>](<span class="m">ʿ̄ˆ</span>),<span class="m">ʿʼ̮꞊</span>(<span class="m">ʿˆ꞊̣˓ˆ̣̈</span>)[<span class="m">ʷ̄˝</span>](<span class="m">ʿ̄ˆ</span>),<span class="m">꞉</span>_<span class="m">ʿ̥̋ˣ̊</span>''[<span class="m">˒̣̇ᵈ̤</span>][<span class="m">ᵖ̈ˉ̣̆ₔ̃</span>+<span class="m">ᵒ̆</span></div>
<div class="l w" style="left:53.75px;top:338.03px">+<span class="m">ˉ̇‡̋ʼ</span>_<span class="m">ˆ꞊̤˝</span>+_<span class="m">ˆ̭̂꜊̣̅</span>+<span class="m">ʷ̱ˉˈ꜊̣</span>+<span class="m">ᵒ̱̈ʼ˒̆</span>+_<span class="m">ˆ̭꜊꞊꞉̱̋˝</span>+<span class="m">ʿ꜊̅</span>,[<span class="m">ˆ̣ˇ̱ₔˉ̰꞊˗</span>_<span class="g">ʽ</span>_<span class="g">ʽ</span><span class="m">ˆ̰ˇₔ̱</span>+<span class="m">ʷ</span>_<span class="m">꞉</span>+<span class="m">˗</span>_<span class="g">ʽ</span><span class="m">ᵒ̣̈</span>+<span class="m">ʼ̤̄ˣʷ˝‡̤̊ʿ̊ˆˇₔ̭̂</span>+<span class="m">ʷʼ꞊̂ʷˉˈ̊꜊̭⌶̊ʿ̊ˉ꞉</span></div>
<div class="l w" style="left:53.75px;top:353.81px">+'<span class="m">ₑₔ̱˒̣</span>)(),<span class="m">˓̰ʿˣˆ‡̄꞉̤ʿ꞊̭˗</span>_<span class="g">ʽ</span>|<span class="m">ˎ̭ˌꜛ̃ʿꜛ̊</span>/<span class="m">˜̈ₐ˛</span>,<span class="m">ʼ̱ˣˆ‡̮ˎˌ̊ꜛ</span>/<span class="m">˜ₐ˛̱</span>,<span class="m">ˉˈ̥̃˝</span>=<span class="m">꞉̆ʿ̆‡̇ˆ̤ꜛ̤˗˗</span>_<span class="g">ʽ</span>/|<span class="m">˜̅ₐ̱̊˛̈ʿˉˉ̣˗</span>_<span class="g">ʽ</span><span class="m">ʿꜛˆ̣ˉ</span>/<span class="m">˜</span></div>
<div class="l w" style="left:53.75px;top:369.58px"><span class="m">ˑ̥˓ˆ⍏̱˓ˆ⌶ˉˏˆ̥ˉ̤˓̮ˆ̃⌶̣̅</span>/<span class="m">˜ₐ˛ʼ˒</span>|/<span class="m">˜̰ₐ̱˗</span>_<span class="g">ʽ</span><span class="m">ʿ̇⍏ᵔ̱ʼ˒̱̇˓̭ˆ⍏ˎˌ⌶̊꞊꞉̊ʿ̅‡̱꞉̈ʿ‡̤̇ˆ̣ˉᵔ̱꞉ʿ̈ˣ̱˓̮ˆ⌶̣</span>|<span class="m">ˆ̣ˉ˓ˆ⌶˓̰ˆ̤⍏ˎˌ</span></div>
<div class="l w" style="left:53.75px;top:385.36px"><span class="m">꞉ʿˣ̱</span>,/<span class="m">˜̮ₐ˛̮꞉ʿ˗</span>_<span class="g">ʽ</span><span class="m">ˌ̣˙̃</span>/<span class="m">˜̊ₐ̆˛̋ˉˏ⊥̂ˌ̱˙ˉ̇ˏ</span>/<span class="m">˜ₐ̆˛ʿ̇⍏̰˗</span>_<span class="g">ʽ</span><span class="m">ˎ̱ˌ⌶ʼ̣˒ˉ̣ˏ⌶ʿ̭ˉ̆꞉ʿˣ̱</span>/<span class="m">˜ₐ̣˛̣꞉̋ʿ‡̮</span>/<span class="m">˜ₐ̱˗</span>_<span class="g">ʽ</span>,<span class="m">꞉̣ʿ̰ˣ̱</span></div>
<div class="l w" style="left:53.75px;top:401.13px"><span class="m">˓̂ˆ̅⌶̄</span>/<span class="m">˜̭ₐ̱˛̰̅</span>/<span class="m">˜̋ₐ̣˛̂˓ˆ̣⌶̱</span>|<span class="m">˓̱̇ˆ⌶˓ˆ̥⍏̄˓̱ˆ̱̈⌶ʼ˒̱꞉ʿ̈‡ˑ˓ˆ̰̊⍏꞉ʿ̥̆‡⌶̰ʿ̥ˉ˓̭ˆ⍏̰˗</span>_<span class="g">ʽ</span><span class="m">꞊̮̂⌶̄ʿ̱ˉ̈˓ˆ̰⌶̈ʿ̈⍏˓̈ˆ̂⌶̅⌶̇ʿˉˌ˙꞊̣ʿ⍏</span>/<span class="m">˜̭ₐ̮̆˛̭꞉̤</span></div>
<div class="l w" style="left:53.75px;top:416.90px"><span class="m">꞉ʿ‡̤ʿ⍏˗</span>_<span class="g">ʽ</span><span class="m">‡˓̰ˆ⌶̥⊥꞉ʿ̣̋ˣ̱ˏ</span>,<span class="m">꞊̥̂꞉̥ʿ̣ˣ̱⌶̈ʿˉ⌶ʿˉ꞉ʿ̂‡꞊</span>/<span class="m">˜˗</span>_<span class="g">ʽ</span><span class="m">˒</span>/<span class="m">˜ₐ̈˛̮</span>=<span class="m">⌶ʿˉˉˏ˓ˆ⍏</span>+<span class="m">ʿ˗</span>_<span class="g">ʽ</span>/<span class="m">˜ₐ̱˛</span>/<span class="m">˜̥ₐ˛̊꞊˓̱ˆ</span></div>
<div class="l w" style="left:53.75px;top:432.68px"><span class="m">꞉ʿ̃ˣ̱</span>+<span class="m">ᵔ̱</span>++<span class="m">ʼ̂˒̈ˎ̣ˌ̣˗</span>_<span class="g">ʽ</span><span class="m">⌶̃ˉ̇ˏ̅ˎˌ⌶̂ˏ̄</span>,<span class="m">ʼ˒̤̋</span>+<span class="m">˓ˆ⌶ˎ̂ˌ̱̈⌶ˎ̣ˌ̊⌶</span>,,<span class="m">ˈ꞊̣̄⊥̰</span>|<span class="m">ʿ⍏ˉ̭ˏᵔ̱ˎ˗</span>_<span class="g">ʽ</span><span class="m">꞉̣̄ʿ̱̃ˣ̱˓ˆ̭⌶</span>/<span class="m">˜ₐ˛⊥ˌ̱˙̣</span>+<span class="m">˓̅ˆ⌶̥⌶ʿ̅</span></div>
<div class="l w" style="left:53.75px;top:448.45px">|<span class="m">˓ˆ̱̃⍏̭ʿ⍏˓̃ˆ̥⌶ˑ</span>/<span class="m">˜ₐ˛̈⌶̣ʿ̣˗</span>_<span class="g">ʽ</span><span class="m">ˌ⌶̣˓ˆ̅⍏ˉˏ̣̃˓ˆ⍏ˈ̥̆꞊̊˓ˆ̮̊⌶</span>+=/<span class="m">˜ₐ˛꞉̮ʿˣ̱ˎ̮ˌ⌶˗</span>_<span class="g">ʽ</span><span class="m">˜̣̆ₐ̃˛̰ˎ̣̅˗</span>_<span class="g">ʽ</span><span class="m">ʿ̥‡̱˓̤ˆ̄⍏ˌ˙̱̅</span>/<span class="m">˜̣ₐ̤˛̆꞊˓̮̇ˆ⌶</span></div>
<div class="l w" style="left:53.75px;top:464.23px">/<span class="m">˜ₐ̱˛ˆ̣̊ˉ</span>/<span class="m">˜ₐ̱˛̂꞊̰⊥</span>|<span class="m">꞉ʿ̥̋ˣ̱</span>/<span class="m">˜˗</span>_<span class="g">ʽ</span><span class="m">ˌ⌶˓ˆ⌶̱̆</span>/<span class="m">˜ₐ˛ˉ̊ˏˆ̆ˉˑ꞊꞉̥ʿ‡̰ˆ̥ˉ꞉̰ʿ̱‡̤̃ˎ̃ˌ̅⌶̤˓ˆ⌶̋ˎˌ̋⌶̭⊥̅</span>+<span class="m">⌶̇ʿ̇ˉ̣ʼ̱˒˓ˆ⌶̥ˑ̃</span>/<span class="m">˜̥ₐ˛</span></div>
<div class="l w" style="left:53.75px;top:480.00px"><span class="m">ˎ̱ˌ̇⌶̭ˎˌ̋⌶̥</span>/<span class="m">˜̱ₐ̱˗</span>_<span class="g">ʽ</span><span class="m">꞉ʿ‡̥⌶̣ʿˉ˓̭ˆ⍏ˎˌ̮⌶̣ʼ˒˗</span>_<span class="g">ʽ</span><span class="m">ᵔ̱ʿ⍏꞉̥ʿˣ̱</span>|<span class="m">꞉̮ʿ̥‡</span>/<span class="m">˜ₐ˛̣̅˓ˆ⌶̃˗</span>_<span class="g">ʽ</span><span class="m">ˈ̮꞊̂ʼ̄˒̥ˌ̭˙ˉ̱˗</span>_<span class="g">ʽ</span><span class="m">⍏̣ᵔ̱ˆ̇ˉ̭</span>/<span class="m">˜</span></div>
<div class="l w" style="left:53.75px;top:495.77px">|<span class="m">˓ˆ⌶̥˓̆ˆ̣̄⍏꞉̥ʿ‡˓ˆ˗</span>_<span class="g">ʽ</span><span class="m">‡꞉ʿ‡꞉ʿ̣ˣ̱</span>,<span class="m">ˑ̥̂꞉ʿ‡̮</span>/<span class="m">˜̆ₐ˗</span>_<span class="g">ʽ</span><span class="m">ʿ‡</span>/<span class="m">˜̣ₐ̆˛꞉̣̇ʿ̭‡̣</span>/<span class="m">˜ₐ˛̱̊ˈ̥̊꞊꞉̄ʿ‡</span>|<span class="m">ˉ̱ˏ̰꞉̥ʿˣ̱˓ˆ̥̅⌶̱ˈ̣꞊̣̃꞉̥̄ʿˣ̱꞉ʿ‡̣ˉ̣̋</span></div>
<div class="l w" style="left:53.75px;top:511.55px"><span class="m">ˉˏ̥</span>,<span class="m">ˑˆˉ꞉ʿ̭‡̭⌶ʿ̋ˉ꞉ʿ̣‡̣˓̮ˆ⌶̣⊥⊥̮</span>+<span class="m">꞉̭ʿ̮‡˓̮ˆ⍏̰</span>=<span class="m">꞊̰</span>=<span class="m">ᵔ̱</span>+<span class="m">ˌ̋˙̄⊥̄꞉̰̇˗</span>_<span class="g">ʽ</span><span class="m">ˈ̥꞊̄⊥˗</span>_<span class="g">ʽ</span><span class="m">꞉ʿ‡ˑ̰꞉ʿ‡̱</span>/<span class="m">˜̆ₐ˛̮̃⊥̱</span></div>
<div class="l w" style="left:53.75px;top:527.32px">=<span class="m">⌶̰ʿˉ</span>/<span class="m">˜̰ₐ˛̈</span>/<span class="m">˜ₐ˛ʿ̃⍏</span>+|<span class="m">˓̂ˆ⌶̰̂˓̂ˆ⌶̭⊥̭˗</span>_<span class="g">ʽ</span><span class="m">˛̆꞉̣̋ʿ̱̊ˣ̱⌶̱ʿˉ̱ˑˎˌ̣⌶꞉ʿ‡̮ˆ̈ˉ⊥̱̅ʿ̣⍏ˉˏ̊</span>/<span class="m">˜̄ₐ̅˛̮˓̣ˆ⍏̱̂ˌ˙̤˓ˆ̰⌶̣ˉ̱˗</span>_<span class="g">ʽ</span><span class="m">˙̣</span>,<span class="m">꞉ʿ‡̮˓̣</span></div>
<div class="l w" style="left:53.75px;top:543.10px"><span class="m">꞉̃˗</span>_<span class="g">ʽ</span><span class="m">ˌ̤⌶̱꞊̥˓ˆ̃⍏</span>=<span class="m">˓ˆ̱⌶̋ʿ⍏ˆ̄ˉ̤˗</span>_<span class="g">ʽ</span><span class="m">˒˓̈ˆ̣̅⌶̮̅ˌ̮̃˙̊˓ˆ⌶̈⌶̣˗</span>_<span class="g">ʽ</span><span class="m">ˏ</span>,+/<span class="m">˜̄ₐ̱˛ˎ̤̂ˌ̮⌶̣̆ˆ̄ˉ</span>|<span class="m">⌶ʿ̊ˉ̂˓̮ˆ̥⌶̣</span>|<span class="m">ˈ̇꞊ˉˏ</span>=<span class="m">˓̇ˆ⌶̥˓ˆ⌶̱</span>/</div>
<div class="l w" style="left:53.75px;top:558.87px"><span class="m">ˆˉ̆ˌ˙꞉̣ʿˣ̱ˉˏ̮̆ʿ⍏̥̃ˌ̰˙꞉̣ʿˣ̱ˈ̱꞊̭</span>/<span class="m">˜̮ₐ˛⊥̱̂˗</span>_<span class="g">ʽ</span><span class="m">˓ˆ̥⌶⊥꞉̱ʿ̥ˣ̱˓ˆ⍏ˌ˙˓̈ˆ⍏˓˗</span>_<span class="g">ʽ</span><span class="m">⍏̥˓̱̋ˆ̭̃⍏</span>|<span class="m">⌶̋ʿˉʼ˒ˑ̱˗</span>_<span class="g">ʽ</span><span class="m">꞉̋ʿ̱̇ˣ̱꞉̮̃</span></div>
<div class="l w" style="left:53.75px;top:574.64px"><span class="m">⌶ʿˉ̭</span>,<span class="m">⊥꞉̤ʿ̃ˣ̱ˎ̥ˌ̤⌶̭ʼ˒̱</span>/<span class="m">˜ₐ˛⌶̭˗</span>_<span class="g">ʽ</span><span class="m">⍏̱ˉ̮ˏ⌶̤ʿ̣ˉˎˌ̱̂⌶ʼ˒ˎ̊ˌ⌶̮</span>/<span class="m">˜̣ₐ̤˛̆꞉̰ʿ̱ˣ̱ʿ⍏̋˓̂ˆ̥⌶̋⌶̋ʿ̄ˉ̮ˉ˗</span>_<span class="g">ʽ</span><span class="m">ˌ̤⌶˓̇ˆ⌶̱̅⌶ʿˉ̂꞉̱</span></div>
<div class="l w" style="left:53.75px;top:590.42px"><span class="m">˗</span>_<span class="g">ʽ</span><span class="m">ˆ̣ˉ̈</span>+<span class="m">ʿ⍏˓̥ˆ⍏̤ˑ̭̃˓ˆ̱⍏</span>/<span class="m">˜˗</span>_<span class="g">ʽ</span><span class="m">ˑ⊥̣̋ˆ̈ˉ̋ˏ</span>,<span class="m">⌶̮ʿˉ̣̆ˑ̄ˑ꞉ʿ‡˓ˆ̣⍏꞉̅ʿ̂‡ˈ̣꞊̈ˑ̇꞊̣</span>/<span class="m">˜˗</span>_<span class="g">ʽ</span><span class="m">ˌ̋⌶˓̱ˆ⌶꞊̱ᵔ̱</span>/<span class="m">˗</span>_<span class="g">ʽ</span><span class="m">꞉̮</span></div>
<div class="l w" style="left:53.75px;top:606.19px">+<span class="m">⊥̤̃ˎ̱̆ˌ̈⌶̣ˈ꞊꞉ʿ‡꞉̱ʿ‡̱꞊꞉̥̊ʿ̰̅‡</span>,<span class="m">ˉˏ̣̋꞉̣ʿ̥̂ˣ̱</span>+<span class="m">ˑ꞊̆˗</span>_<span class="g">ʽ</span><span class="m">⍏ʼ̤˒̮̋</span>,<span class="m">˓̭ˆ⍏˓̣ˆ̄⍏</span>|<span class="m">ˌ̱˙̱˓̣ˆ⍏̈ˑˆ̤ˉ̈ʼ̤˒ᵔ̱ˉˏ꞉̭ʿ‡̅</span></div>
<div class="l w" style="left:53.75px;top:621.97px">/<span class="m">˜̃ₐ̈˛ˌ̭˙̣꞉ʿ̰‡̤ˌ̇˙˓̮˗</span>_<span class="g">ʽ</span><span class="m">꞊̤꞉ʿ̂ˣ̱ʼ̥˒̥</span>/<span class="m">˜̣ₐ̭̊˛̄꞉ʿ̰‡˓̅ˆ̃⍏⌶̰ʿ̣ˉ˓ˆ̣⌶̆꞊̥</span>,<span class="m">꞊˓̂ˆ̰⍏̣˓̱ˆ̥⌶˓̅ˆ̰⌶ᵔ̱˗</span>_<span class="g">ʽ</span><span class="m">꞊̂</span>,<span class="m">˓̰̅ˆ̥̄⍏̣꞉̇ʿ̱‡꞉ʿ‡ˌ̆˙̂˓̅ˆ</span></div>
<div class="l w" style="left:53.75px;top:637.74px">,<span class="m">˓ˆ⍏̰̆˓̅ˆ̱⌶̣ˆ̣ˉ̂⊥ˑ˓ˆ⌶̮̊ʿ⍏꞉̮ʿˣ̱⊥̰⌶ʿ̃ˉ꞉ʿ̃‡̈ˆˉ˓̣ˆ⌶̣˓̣̂ˆ̣̈⌶̤˗</span>_<span class="g">ʽ</span><span class="m">ˎ̥̆ˌ̭⌶</span>/<span class="m">˜ₐ̤˛꞊ˑ̰̋</span>,<span class="m">ʿ⍏</span>|+<span class="m">˗</span>_<span class="g">ʽ</span><span class="m">ˌ̣̈⌶̄</span>+=<span class="m">ʿ̰⍏̈ˉˏ̂˓̰ˆ̭⍏̣̇ˎ̱̅ˌ⌶̱ˈ̇</span></div>
<div class="l w" style="left:53.75px;top:653.51px"><span class="m">˓̮̆ˆ⍏꞉ʿˣ̱ˌ̰̃˙̮̅ˑ̈⊥꞉̮̊ʿˣ̱</span>/<span class="m">˜̄ₐ˛̮</span>/<span class="m">˜̊ₐ˛̤ˑ˗</span>_<span class="g">ʽ</span><span class="m">ˉ̭ˏ˓̰ˆ̱⌶꞉ʿ̋‡</span>+<span class="m">˓̥ˆ⌶ˏ̣</span>,<span class="m">ˈ̃꞊ʿ⍏˓̥ˆ⍏̣̊˓ˆ⌶</span>|+<span class="m">ˎ̱ˌ⌶ˑ̋˗</span>_<span class="g">ʽ</span><span class="m">ˣ̱˓ˆ̱⌶̋꞉̋ʿ‡</span></div>
<div class="l w" style="left:53.75px;top:669.29px"><span class="m">ˆˉ̰ˌ˙̥ˆˉˎˌ̄⌶̋꞉̮ʿ̣‡̆˓ˆ⌶⌶̱ʿˉ˗</span>_<span class="g">ʽ</span>_<span class="g">ʽ</span><span class="m">‡̱ˎˌ̇⌶ˉˏ</span>|<span class="m">꞉̣ʿ‡̅ˈ꞊̰꞊</span>/<span class="m">˜̱̂ₐ˛̣ʿ̂⍏̄ˎ̱ˌ̤⌶꞊̭⌶̣ʿ̤ˉ</span>,<span class="m">˗</span>_<span class="g">ʽ</span><span class="m">˛̱ˎˌ⌶̱ˌ̭˙̣ˆ̥̃ˉ̰ˎˌ⌶</span></div>
<div class="l w" style="left:53.75px;top:685.06px"><span class="m2">ᶻ̱ˑ̭ᶻ̱˜ᶻˎˆ̰ˑᶻ̱˙ˑᶻ̱ˑᶻ̱˜ᶻˎˆˑᶻ̱˙ˑ̣˳¨ˌ</span>,<span class="m2">ᵐ̮ʹˈᵐʹ˛˜</span>_<span class="m2">ˌᶻ̱˛ˑ̭̂ˎ̱˜̣ˑ̤ˆ˙̱ᶻ̱˙̰ˑ˚ᵋ˛̣ˑ̥˜ˆ̱˜ˌ̤ˌ˒</span>,<span class="m2">˜ˑˆ̱˙ᶻ̱˙ˑ˚ᵋ̰˛ˑ˜ˆ˜̭ˌˌ˒</span>,<span class="m2">˙ˆ̭ˑ</span></div>
<div class="l w" style="left:53.75px;top:700.84px"><span class="m2">˒</span>,<span class="m2">ᵓ</span>,<span class="m2">ᵋᵓ̣ˑ˙ˆ̱ˌ˜˒</span>,<span class="m2">ᵓ̣</span>,<span class="m2">ᵋᵓ̣ˑ˙ˆ̱ˌ̱˜ˌ˒</span>,<span class="m2">ᵓ</span>,<span class="m2">ᵋ̰ᵓ</span>,<span class="m2">ᵋᵓ̮ˑˆ˜ˌ</span>_<span class="m2">˒˛̱ˑˇ˜ˑˆ˙̈ᶻ̱˙ˑ̰˚ᵋ˛ˑ˜ˆ˜ˌˌ˒̱</span>,<span class="m2">˜ˑˆ˙ᶻ̱˙ˑ̰˚</span></div>
<div class="l w" style="left:53.75px;top:716.61px"><span class="m2">˜ˑˆ˙̰ᶻ̱˙ˑ˚ᵋ̱˛ˑ̂˜ˆ˜ˌˌ˒</span>,<span class="m2">ˌ̣˒</span>,<span class="m2">ᵓ̤</span>,<span class="m2">ᵋ̤ᵓ</span>,<span class="m2">ᵋᵓˑˆ̇˜ˌ</span>_<span class="m2">˒˛ˑˇ˙ˆ̤ˑ˒ˇᶻ̱ˎ̭ˆˑ̥ᶻ̱˙̣ˑ˚˛ᵋᵐˈ̱˜ˑˆ̰˙̇ᶻ̱˙̱ˑ˚ᵋ̰˛ˑ̣˜</span></div>
<div class="l w" style="left:53.75px;top:732.38px"><span class="m2">ˌ˒</span>,<span class="m2">ᵓ</span>,<span class="m2">ᵋᵓ̱</span>,<span class="m2">ᵋᵓˑˆ˜ˌ</span>_<span class="m2">˒̣˛ˑˇ˳¨˗</span>_<span class="g">ʽ</span><span class="m2">ʹ̂ˈᵐʹ˛̥˜</span>_<span class="m2">ˌᶻ̱˛̮ˑˎ˙ˆˑ˒ˇ̤ᶻ̱ˎ̣ˆˑ̤ᶻ̱˙̃ˑ˚˛ᵋ̈ᵐˈ̱˙ˆˑ̱̆˒̱ˇᶻ̱ˎˆˑᶻ̱˙ˑ˚</span></div>
<div class="l w" style="left:53.75px;top:748.16px"><span class="m2">ᶻ̱ˑᶻ̱˜ᶻˎˆˑ̮ᶻ̱˙ˑ̃ˌ˒̰</span>,<span class="m2">ᵓ</span>,<span class="m2">ᵋ̥ᵓ̣</span>,<span class="m2">ᵋᵓˑ̮ˆ̋˜ˌ</span>_<span class="m2">˒˛ˑ̤ˇ˳¨ˌ</span>,<span class="m2">ᵐʹˈ̱ᵐ̣ʹ˛˜</span>_<span class="m2">ˌ̱ᶻ̱˛ˑ̊ˎ̣˜̥ˑˆ̣˙ᶻ̱˙̣ˑ˚̆ᵋ˛̰ˑ̱˜̂ˆ̭˜ˌˌ̮˒</span>,<span class="m2">ᶻ̱ˑᶻ̱˜̭</span></div>
<div class="l w" style="left:53.75px;top:763.93px"><span class="m2">ˌ̤˒</span>,<span class="m2">ᵓ</span>,<span class="m2">ᵋᵓ</span>,<span class="m2">ᵋᵓ̭ˑˆ˜̮ˌ̱</span>_<span class="m2">˒̭˛ˑˇ̥˳¨ˌ</span>,<span class="m2">ᵐʹ̣ˈᵐ̣ʹ˛̰˜</span>_<span class="m2">ˌ̭ᶻ̱˛ˑˎˌ̱˒</span>,<span class="m2">ᵓ̱</span>,<span class="m2">ᵋᵓ</span>,<span class="m2">ᵋᵓˑ̣ˆ˜̥ˌ</span>_<span class="m2">˒̤˛ˑˇ̤ᶻ̱ˑᶻ̱˜̣ᶻˎˆ̥ˑ̥ᶻ̱˙̤̃ˑ˒</span></div>
<div class="l w" style="left:53.75px;top:779.71px"><span class="m2">˳¨̣ˌ̤</span>,<span class="m2">ᵐʹˈᵐʹ˛̱˜</span>_<span class="m2">ˌᶻ̱˛̣ˑˎ˒</span>,<span class="m2">ᵓ</span>,<span class="m2">ᵋᵓ̣ˑ˙ˆ̱ˌ˜̮ˌ˒̤</span>,<span class="m2">ᵓ</span>,<span class="m2">ᵋᵓ</span>,<span class="m2">ᵋᵓˑ̮ˆ˜ˌ</span>_<span class="m2">˒˛ˑˇ̭˒</span>,<span class="m2">ᵓ</span>,<span class="m2">ᵋᵓ̣ˑ˙̮ˆ̱ˌ˜̣ˌ˒̭</span>,<span class="m2">ᵓ</span>,<span class="m2">ᵋᵓ</span>,</div>
<div class="l w" style="left:53.75px;top:795.48px"><span class="m2">˜̮ˑ̇ˆ̣˙ᶻ̱˙ˑ˚ᵋ˛̣ˑ˜̂ˆ̣˜ˌˌ˒</span>,<span class="m2">ᶻ̱ˑᶻ̱˜ᶻˎˆ̣ˑᶻ̱˙̮ˑ̥˙̃ˆˑ˒̱ˇᶻ̱ˎ̭ˆ̅ˑᶻ̱˙̤ˑ˚˛ᵋ̤ᵐˈ˙ˈˑ̰˜˘ˆᵛ˜˜ˉˌ̰</span>,<span class="m2">ˑ˒ᶻ̱ˑ</span></div>
<div class="l w" style="left:53.75px;top:811.25px"><span class="m2">˳¨̤̅ˌ</span>,<span class="m2">ᵐʹˈᵐʹ˛˜̮</span>_<span class="m2">ˌ̤ᶻ̱˛ˑˎ˳¨ˌ</span>,<span class="m2">ᵐʹ̈ˈ̤ᵐ̱ʹ˛̰˜</span>_<span class="m2">ˌᶻ̱˛ˑ̤ˎ˜ˑˆ˙̭ᶻ̱˙ˑ˚ᵋ˛̱ˑ˜ˆ˜ˌˌ˒</span>,<span class="m2">ˆ̣ˑᶻ̱˙˒ˇᶾ̱˙ˆ̮ˑ˒</span></div>
<div class="l w" style="left:53.75px;top:827.03px"><span class="m2">˙ˈˑ˜˘̱ˆᵛ˜˜̮ˉˌ</span>,<span class="m2">ˑ˒̭ᶻ̱ˑ˙ˈ̣ˑ̤˜˘̰ˆᵛ˜˜̣ˉˌ</span>,<span class="m2">ˑ˒ᶻ̱ˑ̤˒</span>,<span class="m2">ᵓ</span>,<span class="m2">ᵋᵓ̣ˑ˙ˆ̱ˌ̥˜ˆ̣ˑᶻ̱˙˒ˇᶾ̱ˆ̣ˑᶻ̱˙̱˒̥ˇᶾ̱˜̄ˑ̅ˆ̰̅˙ᶻ̱˙̣ˑ˚̱ᵋ̋˛̣</span></div>
<div class="l w" style="left:53.75px;top:842.80px"><span class="m2">˒̭</span>,<span class="m2">ᵓ</span>,<span class="m2">ᵋᵓ̣ˑ˙ˆ̱ˌ˜˳¨̤ˌ̭</span>,<span class="m2">ᵐʹˈᵐ̭ʹ˛˜̰</span>_<span class="m2">ˌᶻ̱˛ˑˎ˜ˑ̰ˆ˙̰ᶻ̱˙̃ˑ̆˚ᵋ˛ˑ˜ˆ˜ˌ̤ˌ˒</span>,<span class="m2">˙̮ˆˑ˒̤ˇᶻ̱ˎˆ̥ˑᶻ̱˙̈ˑ˚˛ᵋᵐˈ̱˙</span></div>
<div class="l w" style="left:53.75px;top:858.58px"><span class="m2">˙ˈˑ˜˘̥ˆ̣ᵛ˜̱˜ˉˌ</span>,<span class="m2">ˑ̤˒ᶻ̱ˑ̣ˆ̣ˑᶻ̱˙̣˒ˇ̥ᶾ̱˒</span>,<span class="m2">ᵓ</span>,<span class="m2">ᵋᵓ̣ˑ˙ˆ̱ˌ̭˜˜ˑˆ˙ᶻ̱˙ˑ̮˚ᵋ̣˛ˑ˜̤ˆ˜ˌˌ˒</span>,<span class="m2">ˆ̣ˑᶻ̱˙˒ˇ̋ᶾ̱˒</span>,<span class="m2">ᵓ</span></div>
<div class="l w" style="left:53.75px;top:874.35px"><span class="m2">ˑ̣˚̥˛ᵋᵐ̤ᵐ̰ˈ˛˜̮ˎ‿ᶺ˛ᶻ̱ˑ̱̃ᶻ̱˜ᶻ̱ˎˆ̤ˑ̤ᶻ̱˙ˑᶻ̱ˑᶻ̱˜̣ᶻˎˆˑᶻ̱˙̰ˑ˳¨̭ˌ̱</span>,<span class="m2">ᵐʹˈᵐ̅ʹ˛˜</span>_<span class="m2">ˌ̣ᶻ̱˛ˑˎˑ̇˚˛ᵋᵐᵐ̣ˈ˛˜ˎ̰‿ᶺ</span></div>
<div class="bar" style="left:927px;top:86.0px;width:1px;height:900px;background:#434343"></div><div class="bar" style="left:928px;top:85.5px;width:12px;height:2.5px;background:#c8c8c8"></div></div></body></html>
